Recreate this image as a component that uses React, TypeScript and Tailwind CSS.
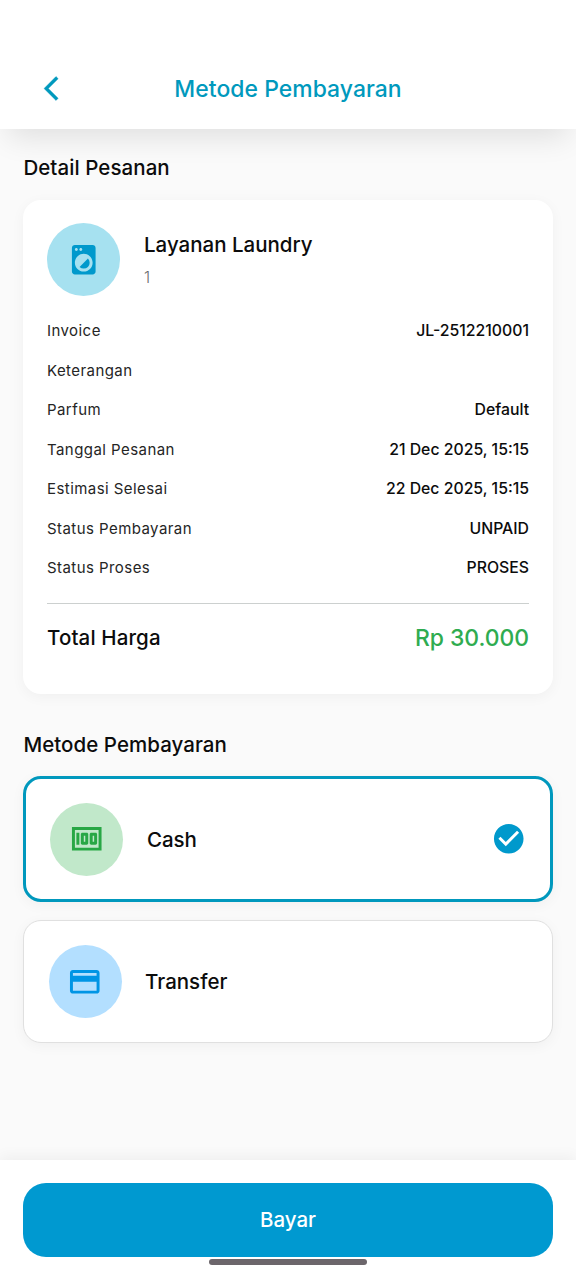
const rows = [
  { label: 'Invoice', value: 'JL-2512210001' },
  { label: 'Keterangan', value: '' },
  { label: 'Parfum', value: 'Default' },
  { label: 'Tanggal Pesanan', value: '21 Dec 2025, 15:15' },
  { label: 'Estimasi Selesai', value: '22 Dec 2025, 15:15' },
  { label: 'Status Pembayaran', value: 'UNPAID' },
  { label: 'Status Proses', value: 'PROSES' },
];

const paths = {
  back: 'M17.51 3.87 15.73 2.1 5.84 12l9.9 9.9 1.77-1.77L9.38 12z',
  laundry:
    'M9.17 16.83a4.008 4.008 0 0 0 5.66 0 4.008 4.008 0 0 0 0-5.66l-5.66 5.66zM18 2.01 6 2c-1.11 0-2 .89-2 2v16c0 1.11.89 2 2 2h12c1.11 0 2-.89 2-2V4c0-1.11-.89-1.99-2-1.99zM10 4c.55 0 1 .45 1 1s-.45 1-1 1-1-.45-1-1 .45-1 1-1zM7 4c.55 0 1 .45 1 1s-.45 1-1 1-1-.45-1-1 .45-1 1-1zm5 16c-3.31 0-6-2.69-6-6s2.69-6 6-6 6 2.69 6 6-2.69 6-6 6z',
  money:
    'M5 8h2v8H5zm7 0H9c-.55 0-1 .45-1 1v6c0 .55.45 1 1 1h3c.55 0 1-.45 1-1V9c0-.55-.45-1-1-1zm-1 6h-1v-4h1v4zm7-6h-3c-.55 0-1 .45-1 1v6c0 .55.45 1 1 1h3c.55 0 1-.45 1-1V9c0-.55-.45-1-1-1zm-1 6h-1v-4h1v4zM2 4v16h20V4H2zm2 14V6h16v12H4z',
  card: 'M20 4H4c-1.11 0-1.99.89-1.99 2L2 18c0 1.11.89 2 2 2h16c1.11 0 2-.89 2-2V6c0-1.11-.89-2-2-2zm0 14H4v-6h16v6zm0-10H4V6h16v2z',
  check:
    'M12 2C6.48 2 2 6.48 2 12s4.48 10 10 10 10-4.48 10-10S17.52 2 12 2zm-2 15-5-5 1.41-1.41L10 14.17l7.59-7.59L19 8l-9 9z',
};

function Icon({ name, className }: { name: keyof typeof paths; className: string }) {
  return (
    <svg viewBox="0 0 24 24" fill="currentColor" className={className} aria-hidden="true">
      <path d={paths[name]} />
    </svg>
  );
}

export default function App() {
  return (
    <div className="flex h-[1280px] w-[576px] flex-col overflow-hidden bg-[#fafafa] font-['Inter',sans-serif] text-[#0c0c0c]">
      <header className="relative z-10 h-[129px] shrink-0 bg-white pt-[48px] shadow-[0_16px_28px_-8px_rgba(0,0,0,0.11)]">
        <div className="grid h-[81px] grid-cols-[104px_1fr_104px] items-center">
          <button className="pb-[1px] pl-[36.5px]" aria-label="Kembali">
            <Icon name="back" className="size-[29px] stroke-current stroke-[0.35] text-[#0099bd] [stroke-linejoin:round]" />
          </button>
          <h1 className="pt-[2px] text-center text-[22.9px] font-medium tracking-[0.06px] whitespace-nowrap text-[#0099bd]">Metode Pembayaran</h1>
        </div>
      </header>

      <main className="flex flex-1 flex-col px-[23.4px]">
        <h2 className="mt-[24px] text-[20.5px] leading-[30px] font-medium tracking-[0.07px]">Detail Pesanan</h2>
        <section className="mt-[17px] h-[494px] shrink-0 rounded-[18px] bg-white px-[23.6px] pt-[23px] shadow-[0_3px_14px_rgba(0,0,0,0.045)]">
          <div className="flex h-[73px] gap-6">
            <div className="flex size-[73px] items-center justify-center rounded-full bg-[#a6e1f0]">
              <Icon name="laundry" className="size-[35.5px] text-[#0099cc]" />
            </div>
            <div className="pt-[7px]">
              <h3 className="text-[20.5px] leading-[30px] font-medium">Layanan Laundry</h3>
              <p className="mt-[7px] text-[15.5px] leading-[22px] font-light text-[#6a6a6a]">1</p>
            </div>
          </div>
          <dl className="mt-[15.3px]">
            {rows.map((row) => (
              <div key={row.label} className="flex h-[39.55px] items-center justify-between leading-[22px]">
                <dt className="text-[15px] tracking-[0.44px] text-[#252525]">{row.label}</dt>
                <dd className="text-[15.8px] font-medium">{row.value}</dd>
              </div>
            ))}
          </dl>
          <div className="mt-[14.7px] h-px bg-[#ccd0cf]" />
          <div className="mt-[18px] flex h-[34px] items-center justify-between">
            <span className="text-[20.5px] font-medium tracking-[0.13px]">Total Harga</span>
            <span className="pb-[1px] text-[22.9px] font-medium tracking-[-0.03px] text-[#2fac50]">Rp 30.000</span>
          </div>
        </section>

        <h2 className="mt-[36px] text-[20.5px] leading-[30px] font-medium tracking-[0.05px]">Metode Pembayaran</h2>
        <button className="mt-[16px] flex h-[126px] shrink-0 items-center rounded-[18px] border-[3px] border-[#0098bd] bg-white px-[23.6px] shadow-[0_3px_14px_rgba(0,0,0,0.045)]">
          <span className="flex size-[73px] items-center justify-center rounded-full bg-[#c1e8ca]">
            <Icon name="money" className="size-[35.5px] text-[#28a745]" />
          </span>
          <span className="ml-6 pt-[2px] text-[20.5px] font-medium tracking-[-0.1px]">Cash</span>
          <Icon name="check" className="ml-auto size-[35.5px] text-[#0099cc]" />
        </button>
        <button className="mt-[18px] flex h-[123px] shrink-0 items-center rounded-[18px] border-[1.5px] border-[#e0e0e0] bg-white px-[24.2px] shadow-[0_3px_14px_rgba(0,0,0,0.045)]">
          <span className="flex size-[73px] items-center justify-center rounded-full bg-[#b3dfff]">
            <Icon name="card" className="size-[35.5px] text-[#0095e5]" />
          </span>
          <span className="ml-[23.5px] pt-[2px] text-[20.5px] font-medium">Transfer</span>
        </button>
      </main>

      <footer className="flex h-[120px] shrink-0 flex-col items-center bg-white px-[23.4px] pt-[23px] shadow-[0_-3px_14px_rgba(0,0,0,0.05)]">
        <button className="h-[74px] w-full shrink-0 rounded-[23px] bg-[#0099d0] text-[20.5px] font-medium text-white">Bayar</button>
        <div className="mt-[2px] h-[6px] w-[158px] rounded-full bg-[#6c666b]" />
      </footer>
    </div>
  );
}
